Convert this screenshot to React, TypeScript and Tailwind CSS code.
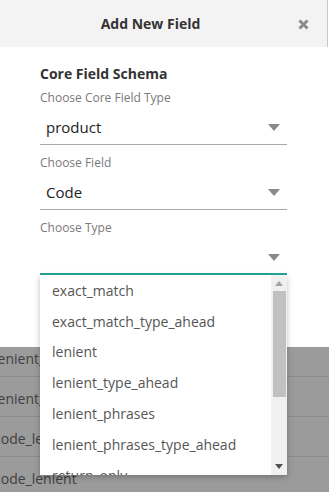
import { NextPage } from "next";

const options = [
  "exact_match",
  "exact_match_type_ahead",
  "lenient",
  "lenient_type_ahead",
  "lenient_phrases",
  "lenient_phrases_type_ahead",
  "return_only",
];

const rows = ["lenient_phrases", "lenient_phrases", "code_lenient", "code_lenient"];

const Caret = () => (
  <svg width="12" height="7" viewBox="0 0 12 7" className="text-[#8a8a8a]">
    <path d="M0 0h12L6 7z" fill="currentColor" />
  </svg>
);

const Select = ({ label, value, active }: { label: string; value: string; active?: boolean }) => (
  <div className="flex flex-col">
    <span className="text-[12px] leading-[16px] text-[#7a7a7a]">{label}</span>
    <div
      className={
        active
          ? "mt-[5px] h-[34px] flex items-center justify-between pl-[6px] pr-[7px] border-b-2 border-[#26a69a]"
          : "mt-[5px] h-[34px] flex items-center justify-between pl-[6px] pr-[7px] border-b border-[#a8a8a8]"
      }
    >
      <span className="text-[15px] text-[#222]">{value}</span>
      <Caret />
    </div>
  </div>
);

const App = () => {
  return (
    <div
      className="relative w-[329px] h-[492px] overflow-hidden bg-[#9b9b9b]"
      style={{ fontFamily: '"Open Sans", sans-serif' }}
    >
      <section className="h-[347px] bg-white flex flex-col">
        <header className="h-[47px] bg-[#f3f3f3] border-r border-[#c8c8c8] w-[328px] flex items-center justify-center relative">
          <h2 className="text-[14px] font-bold text-[#333] m-0 -ml-[26px]">Add New Field</h2>
          <svg
            width="11"
            height="11"
            viewBox="0 0 11 11"
            className="absolute right-[18px] top-[19px] text-[#8a8a8a]"
          >
            <path d="M1.5 1.5l8 8M9.5 1.5l-8 8" stroke="currentColor" strokeWidth="3" />
          </svg>
        </header>
        <div className="px-[40px] pr-[42px] pt-[18px] flex flex-col">
          <h3 className="text-[14px] font-bold text-[#333] leading-[18px] m-0">Core Field Schema</h3>
          <div className="mt-[7px] flex flex-col gap-[10px]">
            <Select label="Choose Core Field Type" value="product" />
            <Select label="Choose Field" value="Code" />
            <Select label="Choose Type" value="" active />
          </div>
        </div>
      </section>

      <div className="overflow-hidden">
        <div className="-mt-[10px]">
          {rows.map((r, i) => (
            <div
              key={i}
              className="h-[40px] flex items-center pt-[3px] border-b border-[#8c8c8c] text-[14px] text-[#404040] -ml-[6px]"
            >
              {r}
            </div>
          ))}
        </div>
      </div>

      <div className="absolute left-[40px] top-[275px] w-[247px] h-[200px] bg-white shadow-[0_2px_6px_rgba(0,0,0,0.25)] flex">
        <ul className="flex-1 overflow-hidden m-0 p-0">
          {options.map((o) => (
            <li key={o} className="h-[30.8px] flex items-center pl-[12px] text-[14px] text-[#555]">
              {o}
            </li>
          ))}
        </ul>
        <div className="w-[16px] bg-[#f0f0f0] flex flex-col items-center">
          <svg width="8" height="5" viewBox="0 0 8 5" className="mt-[6px] text-[#a3a3a3]">
            <path d="M4 0l4 5H0z" fill="currentColor" />
          </svg>
          <div className="mt-[5px] w-[13px] h-[106px] bg-[#c1c1c1]" />
          <div className="flex-1" />
          <svg width="8" height="5" viewBox="0 0 8 5" className="mb-[6px] text-[#505050]">
            <path d="M0 0h8L4 5z" fill="currentColor" />
          </svg>
        </div>
      </div>
    </div>
  );
};

export default App;
